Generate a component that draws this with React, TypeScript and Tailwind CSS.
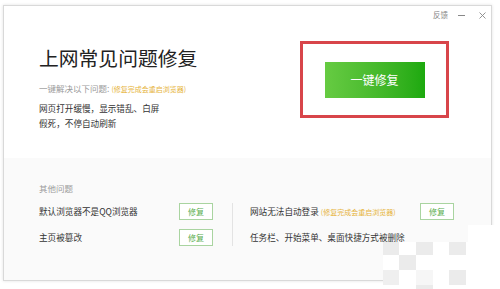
import React from "react";

const mosaic = [
  ["g", "w", "g", "w", "g"],
  ["w", "g", "w", "w", "w"],
  ["l", "w", "p", "w", "g"],
  ["w", "w", "g", "w", "w"],
];

function FixButton() {
  return (
    <button className="w-[34px] h-[17px] border border-[#a9d4a0] bg-white text-[#5aae4e] text-[8px] leading-none flex items-center justify-center">
      修复
    </button>
  );
}

function Note() {
  return <span className="text-[7px] text-[#e6b43c] ml-[2px]">(修复完成会重启浏览器)</span>;
}

export default function App() {
  return (
    <div className="relative w-[500px] h-[289px] bg-white overflow-hidden font-['Noto_Sans_CJK_SC','Noto_Sans',sans-serif] pt-[5px] pl-[3px]">
      <div className="w-[489px] h-[276px] border border-[#d9d9d9] shadow-[0_0_3px_rgba(0,0,0,0.12)] flex flex-col bg-white">
        {/* top */}
        <div className="h-[152px] flex flex-col">
          <div className="h-[18px] flex items-center justify-end pr-[5px] text-[#888]">
            <span className="text-[7.5px] leading-none">反馈</span>
            <div className="ml-[10px] w-[7px] h-px bg-[#888]" />
            <svg className="ml-[14px]" width="7" height="7" viewBox="0 0 7 7">
              <path d="M0.5 0.5 L6.5 6.5 M6.5 0.5 L0.5 6.5" stroke="#888" strokeWidth="0.9" />
            </svg>
          </div>
          <div className="flex">
            <div className="flex-1 pl-[35px] pt-[24px]">
              <h1 className="text-[19.8px] leading-none text-[#222]">上网常见问题修复</h1>
              <div className="mt-[13px] leading-[15px] text-[8.5px] text-[#9a9a9a]">
                一键解决以下问题:<Note />
              </div>
              <div className="mt-[4px] text-[8.6px] leading-[15px] text-[#333]">
                <div>网页打开缓慢，显示错乱、白屏</div>
                <div>假死，不停自动刷新</div>
              </div>
            </div>
            <div className="mt-[17px] mr-[42px] w-[149px] h-[77px] border-[3px] border-[#d8454a] flex items-center justify-center">
              <button className="w-[100px] h-[36px] bg-gradient-to-r from-[#66cb42] to-[#1ca90e] text-white text-[12px] leading-none">
                一键修复
              </button>
            </div>
          </div>
        </div>
        {/* bottom */}
        <div className="flex-1 bg-[#fafafa] pl-[35px] pt-[23px]">
          <div className="text-[8.5px] leading-[15px] text-[#9a9a9a]">其他问题</div>
          <div className="mt-[7px] flex">
            <div className="w-[174px] flex flex-col gap-[9px] text-[8.6px] text-[#333]">
              <div className="h-[17px] flex items-center justify-between">
                <span>默认浏览器不是QQ浏览器</span>
                <FixButton />
              </div>
              <div className="h-[17px] flex items-center justify-between">
                <span>主页被篡改</span>
                <FixButton />
              </div>
            </div>
            <div className="ml-[19px] w-px bg-[#e3e3e3]" />
            <div className="ml-[17px] w-[204px] flex flex-col gap-[9px] text-[8.6px] text-[#333]">
              <div className="h-[17px] flex items-center justify-between">
                <span>
                  网站无法自动登录<Note />
                </span>
                <FixButton />
              </div>
              <div className="h-[17px] flex items-center">
                <span>任务栏、开始菜单、桌面快捷方式被删除</span>
              </div>
            </div>
          </div>
        </div>
      </div>

      {/* mosaic watermark */}
      <div className="absolute left-[468px] top-[225px] right-0 bottom-0 bg-white" />
      <div className="absolute left-[383px] top-[242px] right-0 bottom-0 bg-white">
        <div className="grid grid-cols-[16px_17px_17px_16px_17px] grid-rows-[13px_15px_15px_4px]">
          {mosaic.flat().map((c, i) => (
            <div
              key={i}
              className={
                c === "g"
                  ? "bg-[#ebebeb]"
                  : c === "l"
                  ? "bg-[#efefef]"
                  : c === "p"
                  ? "bg-[#f6f6f6]"
                  : "bg-white"
              }
            />
          ))}
        </div>
      </div>
    </div>
  );
}
